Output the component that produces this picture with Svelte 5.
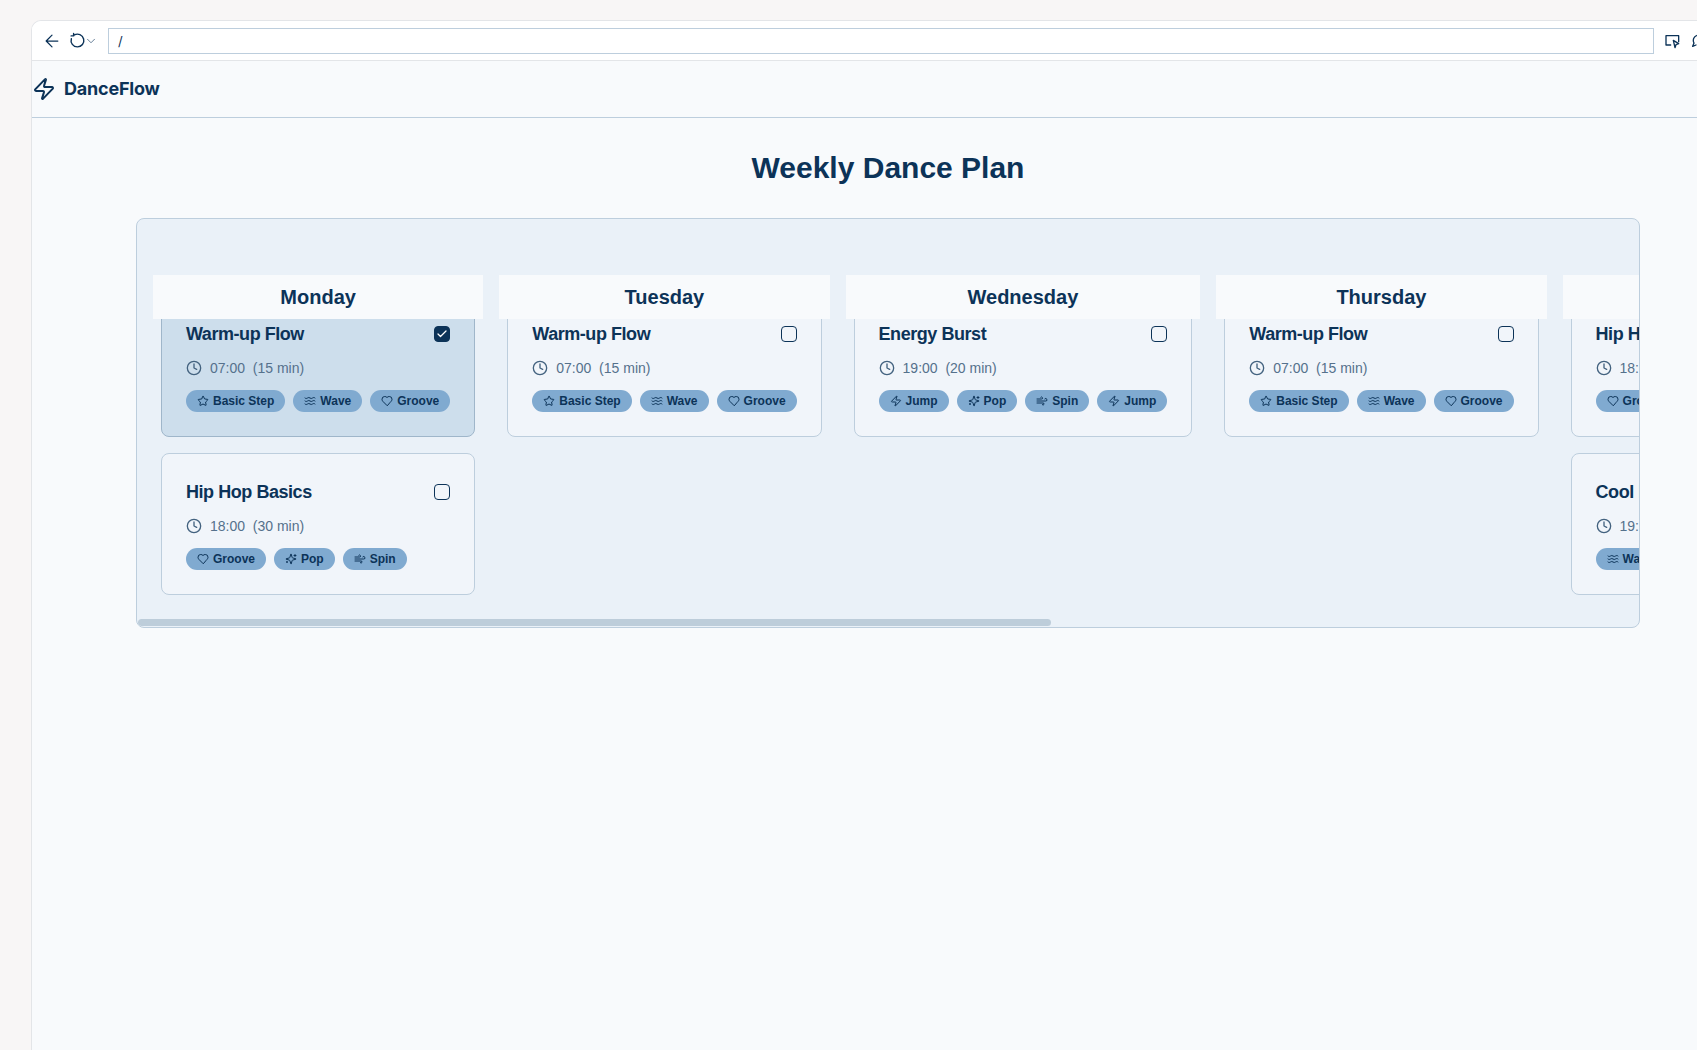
<script>
  const D = {
    'Warm-up': ['Warm-up Flow', '07:00', '15 min', ['star', 'wave', 'heart']],
    hip: ['Hip Hop Basics', '18:00', '30 min', ['heart', 'pop', 'spin']],
    energy: ['Energy Burst', '19:00', '20 min', ['jump', 'pop', 'spin', 'jump']],
    cool: ['Cool Down', '19:30', '10 min', ['wave', 'star', 'heart']]
  };
  const names = { star: 'Basic Step', wave: 'Wave', heart: 'Groove', pop: 'Pop', spin: 'Spin', jump: 'Jump' };
  const days = [
    { name: 'Monday', items: [{ k: 'Warm-up', done: true }, { k: 'hip' }] },
    { name: 'Tuesday', items: [{ k: 'Warm-up' }] },
    { name: 'Wednesday', items: [{ k: 'energy' }] },
    { name: 'Thursday', items: [{ k: 'Warm-up' }] },
    { name: 'Friday', items: [{ k: 'hip' }, { k: 'cool' }] },
    { name: 'Saturday', items: [{ k: 'energy' }] },
    { name: 'Sunday', items: [{ k: 'cool' }] }
  ];
</script>

{#snippet tagIcon(t)}
  <svg class="tag-ic" viewBox="0 0 24 24" fill="none" stroke="currentColor" stroke-width="2" stroke-linecap="round" stroke-linejoin="round">
    {#if t === 'star'}
      <path d="M11.500 2.300a.55.55 0 0 1 1 0l2.700 5.600 6.100.9a.55.55 0 0 1 .3.95l-4.400 4.300 1 6.100a.55.55 0 0 1-.8.6L12 18l-5.400 2.850a.55.55 0 0 1-.8-.6l1-6.100-4.400-4.300a.55.55 0 0 1 .3-.95l6.100-.9z" />
    {:else if t === 'wave'}
      <path d="M2 6c.6.5 1.200 1 2.500 1C7 7 7 5 9.500 5c2.600 0 2.400 2 5 2 2.500 0 2.500-2 5-2 1.300 0 1.900.5 2.500 1" />
      <path d="M2 12c.6.5 1.200 1 2.500 1 2.500 0 2.500-2 5-2 2.600 0 2.400 2 5 2 2.500 0 2.500-2 5-2 1.300 0 1.900.5 2.500 1" />
      <path d="M2 18c.6.5 1.200 1 2.500 1 2.500 0 2.500-2 5-2 2.600 0 2.400 2 5 2 2.500 0 2.500-2 5-2 1.300 0 1.900.5 2.500 1" />
    {:else if t === 'heart'}
      <path d="M19 14c1.490-1.460 3-3.210 3-5.500A5.500 5.500 0 0 0 16.500 3c-1.760 0-3 .5-4.500 2-1.500-1.500-2.740-2-4.500-2A5.500 5.500 0 0 0 2 8.500c0 2.300 1.500 4.050 3 5.500l7 7Z" />
    {:else if t === 'pop'}
      <path d="M9.900 15.500A2 2 0 0 0 8.500 14.100l-6.100-1.600a.5.5 0 0 1 0-1l6.100-1.600A2 2 0 0 0 9.900 8.500l1.600-6.100a.5.5 0 0 1 1 0l1.600 6.100a2 2 0 0 0 1.400 1.400l6.100 1.600a.5.5 0 0 1 0 1l-6.100 1.600a2 2 0 0 0-1.400 1.400l-1.600 6.100a.5.5 0 0 1-1 0z" />
      <path d="M20 3v4M22 5h-4M4 17v2M5 18H3" />
    {:else if t === 'spin'}
      <path d="M17.700 7.700a2.500 2.500 0 1 1 1.800 4.300H2" />
      <path d="M9.600 4.600A2 2 0 1 1 11 8H2" />
      <path d="M12.600 19.400A2 2 0 1 0 14 16H2" />
    {:else}
      <path d="M4 14a1 1 0 0 1-.78-1.630l9.900-10.200a.5.5 0 0 1 .86.46l-1.920 6.020A1 1 0 0 0 13 10h7a1 1 0 0 1 .78 1.630l-9.900 10.200a.5.5 0 0 1-.86-.46l1.920-6.020A1 1 0 0 0 11 14z" />
    {/if}
  </svg>
{/snippet}

<div class="window">
  <div class="chrome">
    <svg class="ic back" viewBox="0 0 24 24"><path d="m12 19-7-7 7-7M19 12H5" /></svg>
    <svg class="ic reload" viewBox="0 0 24 24"><path d="M7.500 4.200A9 9 0 1 1 3.300 9.500" /><path d="M6.500 2v3.500H3" /></svg>
    <svg class="ic chev" viewBox="0 0 24 24"><path d="m6 9 6 6 6-6" /></svg>
    <div class="url">/</div>
    <svg class="ic cast" viewBox="0 0 24 24"><path d="M10 18H3V4h19v9" /><path d="m14 11 8 5-4 1.500-1.500 4.500z" /></svg>
    <svg class="ic msg" viewBox="0 0 24 24"><path d="M21 11a8 8 0 1 0-15 4l-2 5 5-2" /></svg>
  </div>

  <nav class="nav">
    <svg class="bolt" viewBox="0 0 24 24"><path d="M4 14a1 1 0 0 1-.78-1.630l9.900-10.200a.5.5 0 0 1 .86.46l-1.920 6.020A1 1 0 0 0 13 10h7a1 1 0 0 1 .78 1.630l-9.900 10.200a.5.5 0 0 1-.86-.46l1.920-6.020A1 1 0 0 0 11 14z" /></svg>
    <span class="brand">DanceFlow</span>
  </nav>

  <main class="main">
    <h1>Weekly Dance Plan</h1>
    <div class="board">
      <div class="scroller">
        {#each days as day}
          <section class="col">
            <h2>{day.name}</h2>
            <div class="cards">
              {#each day.items as item}
                {@const c = D[item.k]}
                <article class="card" class:done={item.done}>
                  <div class="head">
                    <h3>{c[0]}</h3>
                    <span class="check" class:on={item.done}>
                      {#if item.done}
                        <svg viewBox="0 0 24 24"><path d="M20 6 9 17l-5-5" /></svg>
                      {/if}
                    </span>
                  </div>
                  <div class="time">
                    <svg viewBox="0 0 24 24"><circle cx="12" cy="12" r="10" /><path d="M12 6v6l4 2" /></svg>
                    <span>{c[1]}&nbsp; ({c[2]})</span>
                  </div>
                  <div class="tags">
                    {#each c[3] as t}
                      <span class="tag">{@render tagIcon(t)}{names[t]}</span>
                    {/each}
                  </div>
                </article>
              {/each}
            </div>
          </section>
        {/each}
      </div>
      <div class="track"><div class="thumb"></div></div>
    </div>
  </main>
</div>

<style>
  :global(body) {
    background: #f8f6f6;
    overflow: hidden;
    height: 1050px;
  }
  .window {
    box-sizing: border-box;
    width: 1713px;
    height: 1030px;
    margin: 20px 0 0 31px;
    background: #f8fafc;
    border: 1px solid #e3e5e8;
    border-bottom: 0;
    border-right: 0;
    border-top-left-radius: 10px;
    font-family: "Liberation Sans", sans-serif;
    color: #0c3358;
    overflow: hidden;
  }
  .chrome {
    display: flex;
    align-items: center;
    height: 39px;
    background: #fff;
    border-bottom: 1px solid #e3e5e8;
    padding-left: 10px;
  }
  .ic {
    fill: none;
    stroke: #0c3358;
    stroke-width: 1.800;
    stroke-linecap: round;
    stroke-linejoin: round;
    flex: none;
  }
  .back { width: 20px; height: 20px; margin-right: 7px; stroke-width: 1.500; }
  .reload { width: 17px; height: 17px; margin-right: -2px; stroke-width: 2; }
  .chev { width: 14px; height: 14px; margin-right: 10px; stroke-width: 1.400; stroke: #43627f; }
  .url {
    box-sizing: border-box;
    width: 1546px;
    height: 26px;
    flex: none;
    border: 1px solid #bdcedd;
    background: #fff;
    font: 13px/24px Inter, sans-serif;
    padding-left: 9px;
    margin-right: 10px;
  }
  .cast { width: 16px; height: 16px; margin-right: 10px; stroke-width: 2; }
  .msg { width: 16px; height: 16px; stroke-width: 2; }

  .nav {
    display: flex;
    align-items: center;
    gap: 8px;
    height: 56px;
    border-bottom: 1px solid #bdcedd;
  }
  .bolt {
    width: 24px;
    height: 24px;
    flex: none;
    fill: none;
    stroke: #0c3358;
    stroke-width: 2;
    stroke-linecap: round;
    stroke-linejoin: round;
  }
  .brand {
    font: 700 18px/28px Inter, sans-serif;
    letter-spacing: -0.2px;
  }

  .main {
    padding: 32px 104px 0;
  }
  h1 {
    margin: 0 0 32px;
    font-size: 30px;
    line-height: 36px;
    font-weight: 700;
    text-align: center;
  }
  .board {
    border: 1px solid #bdcedd;
    border-radius: 8px;
    background: #eaf1f8;
    overflow: hidden;
  }
  .scroller {
    display: flex;
    gap: 16px;
    padding: 56px 16px 24px;
    overflow-x: hidden;
  }
  .track {
    height: 8px;
    padding-left: 1px;
  }
  .thumb {
    width: 913px;
    height: 7px;
    background: #bdcdda;
    border-radius: 4px;
  }

  .col {
    flex: none;
    display: flex;
    flex-direction: column;
  }
  h2 {
    position: relative;
    z-index: 1;
    margin: 0;
    height: 44px;
    font-size: 20px;
    line-height: 44px;
    font-weight: 700;
    text-align: center;
    background: #f8fafc;
  }
  .cards {
    display: flex;
    flex-direction: column;
    gap: 16px;
    padding: 0 8px;
    margin-top: -24px;
  }
  .card {
    border: 1px solid #bdcedd;
    border-radius: 8px;
    background: #f1f5fa;
    padding: 24px;
  }
  .card.done {
    background: #cddeec;
    border-color: #9fb6ca;
  }
  .head {
    display: flex;
    align-items: center;
    justify-content: space-between;
    gap: 16px;
    height: 28px;
    margin-bottom: 10px;
  }
  h3 {
    margin: 0;
    font-size: 18px;
    line-height: 26px;
    font-weight: 700;
    letter-spacing: -0.45px;
  }
  .check {
    box-sizing: border-box;
    width: 16px;
    height: 16px;
    flex: none;
    border: 1px solid #0c3358;
    border-radius: 4px;
    display: flex;
    align-items: center;
    justify-content: center;
  }
  .check.on { background: #0c3358; }
  .check svg {
    width: 12px;
    height: 12px;
    fill: none;
    stroke: #fff;
    stroke-width: 2.500;
    stroke-linecap: round;
    stroke-linejoin: round;
  }
  .time {
    display: flex;
    align-items: center;
    gap: 8px;
    height: 20px;
    margin-bottom: 12px;
    font-size: 14px;
    color: #55718c;
  }
  .time svg {
    width: 16px;
    height: 16px;
    fill: none;
    stroke: #43627f;
    stroke-width: 2;
    stroke-linecap: round;
    stroke-linejoin: round;
  }
  .tags {
    display: flex;
    gap: 8px;
  }
  .tag {
    display: inline-flex;
    align-items: center;
    gap: 4px;
    height: 22px;
    padding: 0 11px;
    border-radius: 11px;
    background: #80aad0;
    font-size: 12px;
    font-weight: 700;
    white-space: nowrap;
  }
  .tag-ic {
    width: 12px;
    height: 12px;
    flex: none;
  }
</style>
